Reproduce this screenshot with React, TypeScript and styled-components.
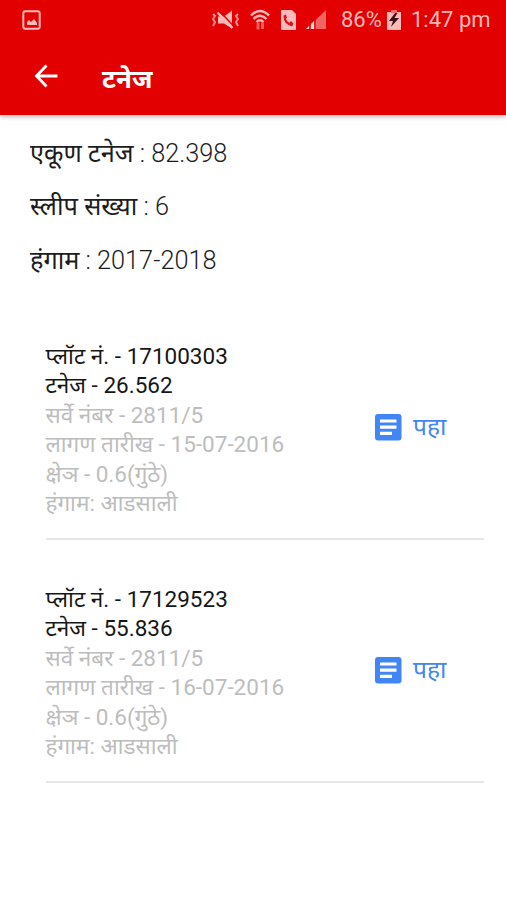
import React from "react";
import styled, { createGlobalStyle } from "styled-components";

const GlobalStyle = createGlobalStyle`
  * { box-sizing: border-box; }
  body { margin: 0; background: #fff; }
`;

const Screen = styled.div`
  width: 506px;
  height: 900px;
  overflow: hidden;
  background: #fff;
  color: #1c1c1c;
  font-family: Roboto, "Noto Sans", sans-serif;
`;

const Header = styled.header`
  height: 115px;
  background: #e30000;
  color: #fff;
  box-shadow: 0 1px 5px rgba(0, 30, 20, 0.4);
`;

const StatusBar = styled.div`
  height: 40px;
  padding: 0 16px 0 22px;
  display: flex;
  align-items: center;
  justify-content: space-between;
  color: #ffb9b9;
`;

const StatusIcons = styled.div`
  display: flex;
  align-items: center;
`;

const StatusText = styled.span<{ $left: number; $width: number }>`
  margin-left: ${(p) => p.$left}px;
  width: ${(p) => p.$width}px;
  font-size: 22px;
  line-height: 40px;
  white-space: nowrap;
`;

const Icon = styled.svg<{ $left?: number }>`
  display: block;
  flex: none;
  margin-left: ${(p) => p.$left ?? 0}px;
`;

const AppBar = styled.div`
  height: 72px;
  padding-left: 33px;
  display: flex;
  align-items: center;
`;

const Title = styled.h1`
  margin: 6px 0 0 44px;
  font-size: 26px;
  line-height: 34px;
  font-weight: 700;
`;

const Summary = styled.section`
  padding: 12px 30px 0;
  height: 203px;
`;

const SummaryLine = styled.div`
  height: 53.3px;
  line-height: 53.3px;
  font-size: 25.3px;
  white-space: nowrap;
  font-weight: 300;
`;

const Label = styled.span`
  font-weight: 400;
`;

const Plot = styled.article`
  margin: 0 22px 21px 45.5px;
  height: 222px;
  padding-top: 24px;
  display: flex;
  border-bottom: 2px solid #e6e6e6;
`;

const Details = styled.div`
  width: 328.5px;
`;

const Detail = styled.div<{ $muted?: boolean }>`
  height: 29.4px;
  line-height: 29.4px;
  font-size: 22.5px;
  white-space: nowrap;
  color: ${(p) => (p.$muted ? "#bdbdbd" : "#161616")};
`;

const ViewButton = styled.button`
  height: 40px;
  margin-top: 65px;
  padding: 0;
  border: 0;
  background: none;
  display: flex;
  align-items: center;
  gap: 11px;
  color: #4285f4;
  font: 400 24.5px/40px Roboto, "Noto Sans", sans-serif;
`;

const plots = [
  { no: "17100303", tonnage: "26.562", date: "15-07-2016" },
  { no: "17129523", tonnage: "55.836", date: "16-07-2016" },
];

function PictureIcon() {
  return (
    <Icon width="19" height="20" viewBox="0 0 19 20">
      <rect x="1.3" y="1.3" width="16.4" height="17.4" rx="2" fill="none" stroke="currentColor" strokeWidth="2" />
      <path d="M5 15v-3l2-2 2 2 3-3 3 4v2z" fill="currentColor" />
    </Icon>
  );
}

function MutedIcon() {
  return (
    <Icon $left={1} width="28" height="22" viewBox="0 0 28 22">
      <path d="M6 7.500h6l8-6v18l-8-5H6z" fill="currentColor" />
      <path d="M7.500 2l14 15" stroke="#e30000" strokeWidth="1.5" />
      <path d="M5.500 3.500l15 15.500" stroke="currentColor" strokeWidth="2.400" />
      <path d="M1 5l2 2-2 3 2 3-2 4M26 5l-2 2 2 3-2 3 2 4" stroke="currentColor" strokeOpacity=".75" strokeWidth="2" fill="none" />
    </Icon>
  );
}

function WifiIcon() {
  return (
    <Icon $left={10} width="20" height="22" viewBox="0 0 20 22">
      <path d="M1 6.500q9-9 18 0M3.500 10q6.500-6.500 13 0M6.500 13q3.500-3.500 7 0" stroke="currentColor" strokeWidth="2.400" fill="none" />
      <path d="M8 13.500v7M12.500 13.500v6.500" stroke="currentColor" strokeWidth="3" strokeOpacity=".5" />
    </Icon>
  );
}

function SimIcon() {
  return (
    <Icon $left={11} width="15" height="20" viewBox="0 0 15 20">
      <path d="M1 0h10l4 4v16H1a1 1 0 0 1-1-1V1a1 1 0 0 1 1-1z" fill="currentColor" />
      <path d="M3.500 6q0 7.500 8 9.500" stroke="#d31515" strokeWidth="2" fill="none" />
      <path d="M2.500 5.500l2.500-1 1 3.500-2 1zM8 13l2-2 2.500 2.500-1.500 2.500z" fill="#d31515" />
    </Icon>
  );
}

function SignalIcon() {
  return (
    <Icon $left={10} width="20" height="20" viewBox="0 0 20 20">
      <path d="M0 19L20 0v19z" fill="#f26565" />
      <path d="M0 19l3-3v3zM5 19v-5l3-3v8z" fill="#ffd9d9" />
      <path d="M4 14v5M9 10v9" stroke="#e30000" strokeWidth="1.3" />
    </Icon>
  );
}

function BatteryIcon() {
  return (
    <Icon width="14" height="20" viewBox="0 0 14 20">
      <path d="M0 2h4V0h6v2h4v18H0z" fill="currentColor" />
      <path d="M4 0h6v3H4z" fill="#f66" />
      <path d="M8 3L2 11h4l-2 6 8-9H7.500l3-5z" fill="#3b1111" />
    </Icon>
  );
}

function BackIcon() {
  return (
    <Icon $left={1} width="24" height="24" viewBox="0 0 24 24">
      <path d="M23.500 12H3M12.500 1.500L2.500 12l10 10.500" fill="none" stroke="#fff" strokeWidth="2.800" />
    </Icon>
  );
}

function ArticleIcon() {
  return (
    <Icon width="28" height="28" viewBox="0 0 28 28">
      <rect x="1" y="1" width="26.500" height="26.500" rx="3" fill="#4285f4" />
      <path d="M6 8h16.500M6 14.200h16.500M6 20.400h12" stroke="#fff" strokeWidth="3.200" />
    </Icon>
  );
}

export default function App() {
  return (
    <Screen>
      <GlobalStyle />
      <Header>
        <StatusBar>
          <PictureIcon />
          <StatusIcons>
            <MutedIcon />
            <WifiIcon />
            <SimIcon />
            <SignalIcon />
            <StatusText $left={15} $width={46}>86%</StatusText>
            <BatteryIcon />
            <StatusText $left={10} $width={79}>1:47 pm</StatusText>
          </StatusIcons>
        </StatusBar>
        <AppBar>
          <BackIcon />
          <Title>टनेज</Title>
        </AppBar>
      </Header>
      <Summary>
        <SummaryLine><Label>एकूण टनेज</Label> : 82.398</SummaryLine>
        <SummaryLine><Label>स्लीप संख्या</Label> : 6</SummaryLine>
        <SummaryLine><Label>हंगाम</Label> : 2017-2018</SummaryLine>
      </Summary>
      {plots.map((plot) => (
        <Plot key={plot.no}>
          <Details>
            <Detail>प्लॉट नं. - {plot.no}</Detail>
            <Detail>टनेज - {plot.tonnage}</Detail>
            <Detail $muted>सर्वे नंबर - 2811/5</Detail>
            <Detail $muted>लागण तारीख - {plot.date}</Detail>
            <Detail $muted>क्षेञ - 0.6(गुंठे)</Detail>
            <Detail $muted>हंगाम: आडसाली</Detail>
          </Details>
          <ViewButton>
            <ArticleIcon />
            पहा
          </ViewButton>
        </Plot>
      ))}
    </Screen>
  );
}
